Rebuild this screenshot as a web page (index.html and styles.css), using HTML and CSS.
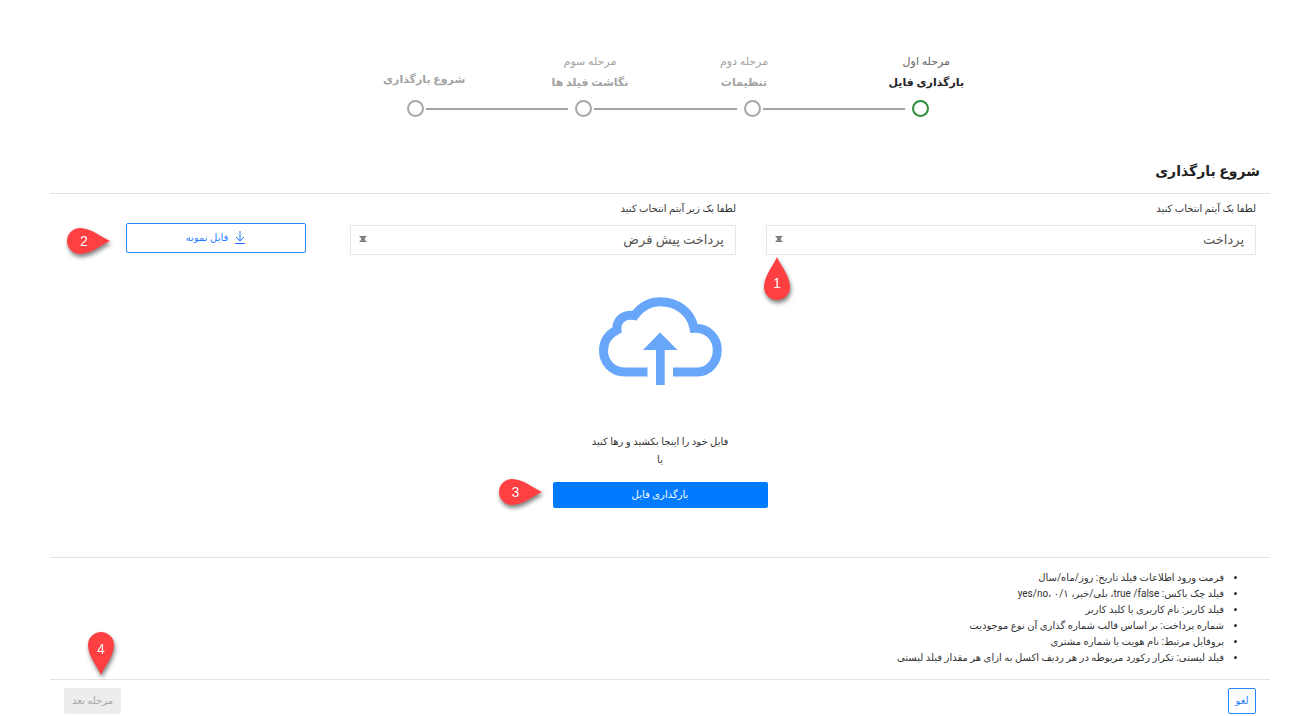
FILE: index.html
```html
<!DOCTYPE html>
<html lang="fa" dir="rtl">
<head>
<meta charset="utf-8">
<meta name="viewport" content="width=device-width, initial-scale=1">
<title>شروع بارگذاری</title>
<link rel="stylesheet" href="styles.css">
</head>
<body>
<svg class="defs" width="0" height="0" aria-hidden="true">
  <symbol id="clear" viewBox="0 0 8 8">
    <path d="M0.500 1.500h7M0.500 6.500h7" stroke="currentColor" stroke-width="1"/>
    <path d="M2 2l4 4M6 2l-4 4" stroke="currentColor" stroke-width="1.800"/>
  </symbol>
  <symbol id="drop" viewBox="0 0 26 43">
    <path d="M13 0C9 9 0 19 0 30a13 13 0 0 0 26 0C26 19 17 9 13 0z" fill="#ff4043"/>
  </symbol>
</svg>
<main class="page">
  <section class="stepper" aria-label="مراحل">
    <ol class="steps">
      <li class="step step-current"><span class="step-number">مرحله اول</span><span class="step-name">بارگذاری فایل</span></li>
      <li class="step"><span class="step-number">مرحله دوم</span><span class="step-name">تنظیمات</span></li>
      <li class="step"><span class="step-number">مرحله سوم</span><span class="step-name">نگاشت فیلد ها</span></li>
      <li class="step step-last"><span class="step-name">شروع بارگذاری</span></li>
    </ol>
    <div class="track" aria-hidden="true">
      <span class="dot dot-current"></span><span class="line"></span><span class="dot"></span><span class="line"></span><span class="dot"></span><span class="line"></span><span class="dot"></span>
    </div>
  </section>

  <h1 class="title">شروع بارگذاری</h1>

  <form class="form">
    <section class="fields">
      <div class="field">
        <label class="label" for="item">لطفا یک آیتم انتخاب کنید</label>
        <div class="picker">
          <select class="select" id="item"><option>پرداخت</option></select>
          <svg class="clear" aria-hidden="true"><use href="#clear"/></svg>
          <span class="pin pin-up"><svg class="pin-shape" viewBox="0 0 26 43"><use href="#drop"/></svg><span class="pin-number">1</span></span>
        </div>
      </div>
      <div class="field">
        <label class="label" for="subitem">لطفا یک زیر آیتم انتخاب کنید</label>
        <div class="picker">
          <select class="select" id="subitem"><option>پرداخت پیش فرض</option></select>
          <svg class="clear" aria-hidden="true"><use href="#clear"/></svg>
        </div>
      </div>
      <div class="sample">
        <button class="button button-outline button-sample" type="button">
          <svg class="download" viewBox="0 0 12 14" aria-hidden="true"><path d="M6 0v10M2 6l4 4 4-4M1 12.500h10" fill="none" stroke="currentColor" stroke-width="1"/></svg>
          فایل نمونه
        </button>
        <span class="pin pin-side pin-sample"><svg class="pin-shape" viewBox="0 0 43 26"><use href="#drop" width="26" height="43" transform="translate(43 0) rotate(90)"/></svg><span class="pin-number">2</span></span>
      </div>
    </section>

    <section class="upload">
      <svg class="cloud" viewBox="18 16 125 90" aria-hidden="true">
        <g fill="none" stroke="#68a6f9" stroke-width="9">
          <path d="M67.500 92H45C32 92 23.500 82 23.500 70.500C23.500 61 29 54 37 50C36 41 43 33.500 54.500 35.500C61 26.500 69.500 21.700 80 21.700C97 21.700 111 32 114 48.200C128 47.500 137.300 58 137.300 70C137.300 82 129 92 117 92H93"/>
        </g>
        <path d="M80 52.500 97.500 70H84.700v35H76V70H63z" fill="#68a6f9"/>
      </svg>
      <p class="hint">فایل خود را اینجا بکشید و رها کنید<br>یا</p>
      <div class="choose">
        <button class="button button-primary" type="button">بارگذاری فایل</button>
        <span class="pin pin-side pin-choose"><svg class="pin-shape" viewBox="0 0 43 26"><use href="#drop" width="26" height="43" transform="translate(43 0) rotate(90)"/></svg><span class="pin-number">3</span></span>
      </div>
    </section>

    <ul class="notes">
      <li>فرمت ورود اطلاعات فیلد تاریخ: روز/ماه/سال</li>
      <li>فیلد چک باکس: true /false، بلی/خیر، ۰/۱ ،yes/no</li>
      <li>فیلد کاربر: نام کاربری یا کلید کاربر</li>
      <li>شماره پرداخت: بر اساس قالب شماره گذاری آن نوع موجودیت</li>
      <li>پروفایل مرتبط: نام هویت یا شماره مشتری</li>
      <li>فیلد لیستی: تکرار رکورد مربوطه در هر ردیف اکسل به ازای هر مقدار فیلد لیستی</li>
    </ul>

    <footer class="actions">
      <button class="button button-outline button-cancel" type="button">لغو</button>
      <div class="next">
        <button class="button button-next" type="button" disabled>مرحله بعد</button>
        <span class="pin pin-down"><svg class="pin-shape" viewBox="0 0 26 43"><use href="#drop" width="26" height="43" transform="translate(26 43) rotate(180)"/></svg><span class="pin-number">4</span></span>
      </div>
    </footer>
  </form>
</main>
</body>
</html>
```

FILE: styles.css
```css
* { box-sizing: border-box; }
body {
  margin: 0;
  background: #fff;
  color: #333;
  font: 10px/16px Roboto, "DejaVu Sans", sans-serif;
}
.defs { position: absolute; }
.page { padding: 52px 30px 0 50px; }

.stepper {
  width: 674px;
  max-width: 100%;
  margin-inline-start: 265px;
}
.steps {
  display: grid;
  grid-template-columns: repeat(4, 1fr);
  justify-items: end;
  height: 48px;
  margin: 0;
  padding: 0;
  list-style: none;
}
.step {
  display: flex;
  flex-direction: column;
  align-items: center;
  padding-inline-end: 52px;
  color: #a3a3a3;
  white-space: nowrap;
}
.step-number { font-size: 11px; line-height: 20px; }
.step-name { font-size: 11px; font-weight: bold; line-height: 22px; }
.step-current .step-number { color: #666; }
.step-current .step-name { color: #222; }
.step-last { padding-top: 17px; }
.track { display: flex; align-items: center; padding: 0 76px; }
.dot { width: 17px; height: 17px; border: 2px solid #a8a8a8; border-radius: 50%; }
.dot-current { border-color: #2e8b37; }
.line { flex: 1; height: 2px; margin-inline: 7px 2px; background: #a3a3a3; }

.title {
  margin: 0;
  padding: 36px 10px 4px;
  border-bottom: 1px solid #e3e3e3;
  color: #222;
  font-size: 14px;
  font-weight: bold;
  line-height: 36px;
}

.fields {
  display: grid;
  grid-template-columns: 490fr 386fr 194fr;
  gap: 30px;
  padding: 7px 14px 0 76px;
}
.label { display: block; margin-bottom: 8px; }
.picker, .sample, .choose, .next { position: relative; }
.select {
  display: block;
  width: 100%;
  height: 30px;
  padding: 0 11px;
  border: 1px solid #e6e6e6;
  border-radius: 0;
  appearance: none;
  background: #fff;
  color: #555;
  font: inherit;
  font-size: 13px;
}
.clear { position: absolute; left: 9px; top: 10px; width: 8px; height: 8px; color: #777; }
.sample { padding-top: 22px; padding-inline-start: 14px; }

.button {
  display: flex;
  align-items: center;
  justify-content: center;
  gap: 6px;
  height: 26px;
  padding: 0 7px;
  border: 1px solid transparent;
  border-radius: 2px;
  font: inherit;
}
.button-outline { border-color: #1f86ff; background: #fff; color: #1f7bff; }
.button-sample { width: 100%; height: 30px; }
.button-primary { width: 215px; background: #007bff; color: #fff; font-weight: 500; }
.button-cancel { width: 28px; padding: 0; }
.button-next { background: #ededed; color: #a6a6a6; }
.download { width: 12px; height: 14px; }

.upload {
  display: flex;
  flex-direction: column;
  align-items: center;
  padding: 41px 0 49px;
  border-bottom: 1px solid #e3e3e3;
}
.cloud { width: 125px; height: 90px; }
.hint { margin: 47px 0 13px; line-height: 18px; text-align: center; }

.notes {
  margin: 0;
  padding: 12px 46px 13px 0;
  border-bottom: 1px solid #e3e3e3;
}
.notes li { line-height: 16px; }

.actions { display: flex; justify-content: space-between; padding: 8px 14px 0; }

.pin {
  position: absolute;
  display: flex;
  filter: drop-shadow(1px 3px 2px rgb(0 0 0 / 50%));
}
.pin-shape { width: 100%; height: 100%; }
.pin-number {
  position: absolute;
  width: 26px;
  color: #fff;
  font: 14px/26px "Liberation Sans", sans-serif;
  text-align: center;
}
.pin-up, .pin-down { width: 26px; height: 43px; }
.pin-side { width: 43px; height: 26px; }
.pin-side .pin-number { left: 4px; top: 0; }
.pin-up { left: -2px; top: 32px; }
.pin-up .pin-number { left: 0; bottom: 4px; }
.pin-down { left: 24px; bottom: 39px; }
.pin-down .pin-number { left: 0; top: 4px; }
.pin-sample { left: -59px; bottom: 1px; }
.pin-choose { left: -54px; top: -3px; }
```
